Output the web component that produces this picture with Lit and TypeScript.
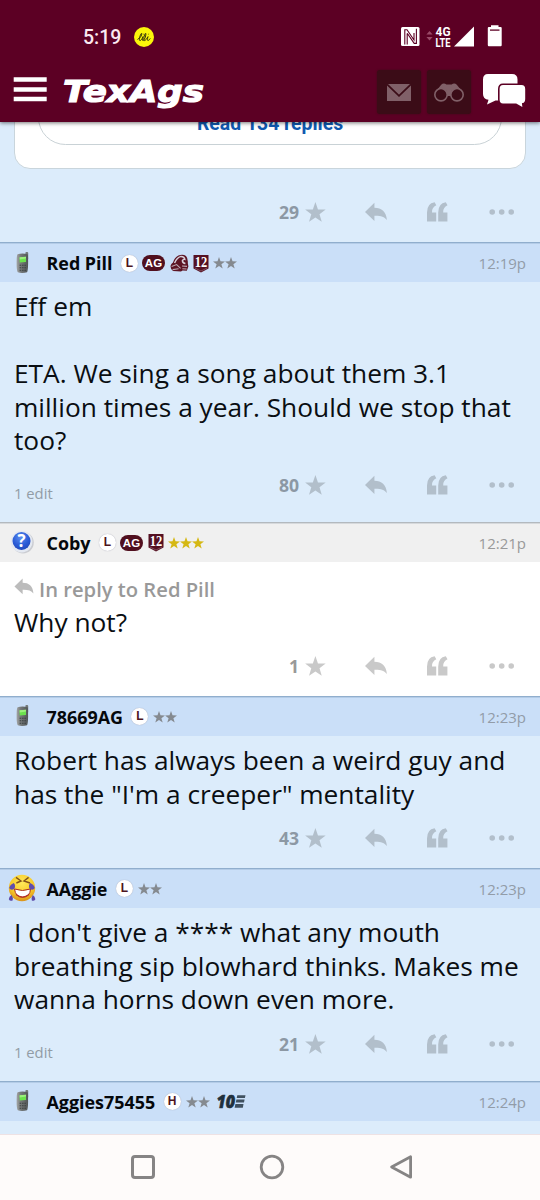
import { LitElement, html, svg, css, nothing } from "lit";
import { customElement, property } from "lit/decorators.js";

interface Post {
  name: string;
  time: string;
  avatar: "phone" | "question" | "laugh";
  badges: string[];
  lines: string[];
  score: string;
  edited?: boolean;
  reply?: string;
  own?: boolean;
}

const posts: Post[] = [
  {
    name: "Red Pill", time: "12:19p", avatar: "phone",
    badges: ["L", "AG", "helmet", "12", "s2"],
    lines: ["Eff em", "", "ETA. We sing a song about them 3.1", "million times a year. Should we stop that", "too?"],
    score: "80", edited: true,
  },
  {
    name: "Coby", time: "12:21p", avatar: "question",
    badges: ["L", "AG", "12", "g3"],
    lines: ["Why not?"], reply: "In reply to Red Pill", score: "1", own: true,
  },
  {
    name: "78669AG", time: "12:23p", avatar: "phone", badges: ["L", "s2"],
    lines: ["Robert has always been a weird guy and", 'has the "I\'m a creeper" mentality'], score: "43",
  },
  {
    name: "AAggie", time: "12:23p", avatar: "laugh", badges: ["L", "s2"],
    lines: ["I don't give a **** what any mouth", "breathing sip blowhard thinks. Makes me", "wanna horns down even more."],
    score: "21", edited: true,
  },
  {
    name: "Aggies75455", time: "12:24p", avatar: "phone", badges: ["H", "s2", "ten"],
    lines: [], score: "",
  },
];

const STAR = "M10 0 L12.5 7.2 L20 7.4 L14 12 L16.2 19.3 L10 15 L3.8 19.3 L6 12 L0 7.4 L7.5 7.2 Z";
const REPLY = "M0 10 L9.6 0.6 V5.7 C17 5.7 21.6 9.5 22.3 18.2 C19.5 14.8 16 13.6 9.6 13.8 V19.2 Z";

const stars = (n: number, color: string) => html`
  <svg width=${n * 12} height="12" viewBox="0 0 ${n * 12} 12">
    ${Array.from({ length: n }, (_, i) => svg`<path d=${STAR} fill=${color} transform="translate(${i * 12} 0) scale(.6)"/>`)}
  </svg>`;

const phone = html`<svg width="16" height="24" viewBox="0 0 16 24">
  <defs><linearGradient id="pb" x1="0" x2="1"><stop offset="0" stop-color="#a3a5a5"/><stop offset=".35" stop-color="#757979"/><stop offset="1" stop-color="#505556"/></linearGradient></defs>
  <rect x="11.4" y="1" width="2.8" height="8" rx="1" fill="#73797a"/>
  <path d="M3.6 3.3 Q8 2 13.5 3.2 Q14.2 3.6 14.1 12 Q14 20 13 21.2 Q8 22.8 3.8 21.3 Q2.6 20 2.6 12 Q2.6 4 3.6 3.3Z" fill="url(#pb)"/>
  <path d="M5.6 6.2 L12 5.8 V11 L5.6 11.4Z" fill="#6be24d"/><path d="M5.6 6.2 L12 5.8 V7.6 L5.6 8.4Z" fill="#9cf07e"/>
  <path d="M5.6 14.3h6.4M5.6 16.8h6.4M5.6 19.2h6.4" stroke="#3c4142" stroke-width="1.1" stroke-dasharray="1.6 .8"/>
</svg>`;

const question = html`<svg width="24" height="24" viewBox="0 0 24 24">
  <defs><radialGradient id="qb" cx=".45" cy=".3" r=".75"><stop offset="0" stop-color="#5c8df0"/><stop offset=".6" stop-color="#2b5cd6"/><stop offset="1" stop-color="#2046b8"/></radialGradient></defs>
  <circle cx="13" cy="12.6" r="10.8" fill="#cbcdd2"/><circle cx="11.6" cy="11.6" r="10.8" fill="#e4e9f2"/>
  <circle cx="11.5" cy="11" r="9" fill="url(#qb)"/>
  <text x="11.5" y="17" text-anchor="middle" font-family="Open Sans" font-weight="700" font-size="17" fill="#fff">?</text>
</svg>`;

const laugh = html`<svg width="28" height="28" viewBox="0 0 28 28">
  <defs><radialGradient id="lf" cx=".5" cy=".3" r=".7"><stop offset="0" stop-color="#ffe95a"/><stop offset=".65" stop-color="#f7c928"/><stop offset="1" stop-color="#d9921b"/></radialGradient></defs>
  <circle cx="14" cy="14" r="13.2" fill="url(#lf)"/>
  <path d="M8 3.4 L13 7 L8.4 9 M20.6 3.4 L16 7 L22 9" fill="none" stroke="#80521b" stroke-width="1.4"/>
  <path d="M6.5 15 Q14.5 18 22.5 15 Q22 23 14.5 23.3 Q7.5 23 6.5 15Z" fill="#fff" stroke="#aa2b22" stroke-width="1"/>
  <path d="M8 20.6 Q14.5 25.5 21 20.6" fill="none" stroke="#b53328" stroke-width="1.3"/>
  <path d="M5.8 9 Q8 11.5 6.4 14.8 Q3 17 1.2 14 Q2 10.5 5.8 9Z M22.2 9 Q20 11.5 21.6 14.8 Q25 17 26.8 14 Q26 10.5 22.2 9Z" fill="#604dae"/>
  <path d="M3.6 21 Q5.6 24 4.6 26.4 Q2 27.5 .8 25.2 Q1 22.5 3.6 21Z M24.8 21 Q23 24 23.8 26.4 Q26 27.5 27.4 25.2 Q27 22.5 24.8 21Z" fill="#5b4aaa"/>
</svg>`;

const avatars = { phone, question, laugh };

const badge = (b: string) => {
  switch (b) {
    case "L":
    case "H":
      return html`<span class="round">${b}</span>`;
    case "AG":
      return html`<span class="ag">AG</span>`;
    case "helmet":
      return html`<svg class="helmet" width="19" height="18" viewBox="0 0 19 18">
        <path d="M.5 12 Q1 9.5 3 8.4 Q4.4 3.4 8.4 1.4 Q13 -.4 16 2 Q18.2 4.4 17.8 9 L18.4 12.5 L16.8 16.8 L12.6 16.4 L11 17.4 L3 17 Q.4 15 .5 12Z" fill="#5c1424"/>
        <path d="M4.6 9 Q6.6 3.8 11 2.4 Q14.6 2.6 14.8 5.4 Q13.4 5 12.4 6.6 Q12.6 9.2 15.4 9.6" fill="none" stroke="#d8d0da" stroke-width="1.5"/>
        <path d="M1.6 12.4 L6.6 10.6 L10.6 14.4 M2.6 15.6 L8.6 14.8 M12 12 L17 12.4 M12.4 14.8 L16.6 15" fill="none" stroke="#bda9b4" stroke-width="1.1"/>
      </svg>`;
    case "12":
      return html`<svg class="twelve" width="16" height="19" viewBox="0 0 16 19">
        <path d="M.5 1 H15.5 V14.6 L8 18.6 L.5 14.6Z" fill="#551122"/><path d="M1.8 14 L8 17 L14.2 14" fill="none" stroke="#ad8794" stroke-width=".5"/>
        <text x="8" y="13.2" text-anchor="middle" textLength="12.5" lengthAdjust="spacingAndGlyphs" font-family="Liberation Serif" font-weight="700" font-size="14.5" fill="#fff">12</text>
      </svg>`;
    case "s2":
      return stars(2, "#858a90");
    case "g3":
      return stars(3, "#d5b813");
    case "ten":
      return html`<svg class="ten" width="30" height="15" viewBox="0 0 30 15">
        <text x="0.5" y="14" textLength="18.5" lengthAdjust="spacingAndGlyphs" font-family="Open Sans" font-weight="800" font-style="italic" font-size="18" fill="#20303d" stroke="#20303d" stroke-width=".6">10</text>
        <path d="M21.3 1.2H29.5L28.9 3.9H20.7Z M20.4 5.6H28.6L28 8.4H19.8Z M19.4 10.1H27.5L26.8 13.8H18.6Z" fill="#405160"/>
      </svg>`;
  }
  return nothing;
};

@customElement("post-actions")
class PostActions extends LitElement {
  @property() score = "";
  static styles = css`
    :host { display: flex; align-items: center; height: 54px; color: #b2bfcb; }
    .score { font: 700 17.6px/24px "Open Sans", sans-serif; color: #8c98a4; margin-right: 6px; }
    :host([plain]) { color: #c9c9c9; }
    :host([plain]) .score { color: #999; }
    svg { display: block; fill: currentColor; }
    .reply { margin-left: 39px; }
    .quote { margin-left: 40px; }
    .dots { margin-left: 41px; }
  `;
  render() {
    return html`
      <span class="score">${this.score}</span>
      <svg width="21" height="20" viewBox="0 0 20.2 19.5"><path d=${STAR} /></svg>
      <svg class="reply" width="22" height="20" viewBox="0 0 22.4 20"><path d=${REPLY} /></svg>
      <svg class="quote" width="21" height="20" viewBox="0 0 21 20">
        <path d="M0 19.4 V10.5 Q0 1.2 7.6 .2 L9.3 3.2 Q4.7 5.4 5 10.4 H9.2 V19.4Z" />
        <path d="M11.2 19.4 V10.5 Q11.2 1.2 18.8 .2 L20.5 3.2 Q15.9 5.4 16.2 10.4 H20.4 V19.4Z" />
      </svg>
      <svg class="dots" width="26" height="6" viewBox="0 0 26 6"><circle cx="3.2" cy="3" r="2.8"/><circle cx="12.7" cy="3" r="2.8"/><circle cx="22.2" cy="3" r="2.8"/></svg>`;
  }
}

@customElement("forum-post")
class ForumPost extends LitElement {
  @property({ attribute: false }) post!: Post;
  static styles = css`
    :host { display: block; font-family: "Open Sans", sans-serif; background: #dcecfb; color: #0a0e12; }
    .own { background: #fff; }
    header { box-sizing: border-box; height: 40px; display: flex; align-items: center; padding: 1px 14px 0 0; border-top: 1px solid #90aecd; box-shadow: inset 0 1px #b4cce7; background: #cadff8; }
    .own header { background: #f0f0f0; border-color: #b3b9be; box-shadow: inset 0 1px #d6d9dc; }
    .avatar { width: 46.5px; flex: none; display: flex; justify-content: center; }
    .avatar svg { margin: -1px 2px 0 0; }
    .avatar svg, .badges svg { display: block; }
    .name { font-weight: 700; font-size: 17.9px; line-height: 24px; white-space: nowrap; color: #05080c; }
    .badges { display: flex; align-items: center; margin-left: 8.5px; flex: 1; }
    .round { box-sizing: border-box; width: 17px; height: 17px; border-radius: 50%; background: #fff; box-shadow: 0 0 1px #99a; color: #4d1420; font: 700 12px/17px "Liberation Sans", sans-serif; text-align: center; margin-right: 4px; }
    .ag { width: 23px; height: 16px; border-radius: 8px; background: #500f1e; color: #fff; font: 700 11.5px/16px "Liberation Sans", sans-serif; text-align: center; margin-right: 5px; }
    .round + svg { margin-left: 1px; }
    .helmet { margin-right: 4px; }
    .twelve { margin-right: 4px; }
    .ten { margin-left: 6px; overflow: visible; }
    time { font-size: 15px; color: #929ca8; }
    .own time { color: #999; }
    .body { padding: 8px 14px 0; font-size: 26.3px; line-height: 33.6px; white-space: nowrap; }
    .line { height: 33.6px; }
    .reply { display: flex; align-items: center; gap: 5px; height: 33px; padding-top: 3px; font-weight: 600; font-size: 20.2px; color: #999; }
    .reply svg { display: block; fill: #bcbcbc; margin-bottom: 5px; }
    footer { display: flex; justify-content: space-between; align-items: flex-start; height: 56.8px; padding: 0 25px 0 14px; }
    footer.edited { height: 64px; }
    .body + footer.edited { height: 64px; }
    .own footer { height: 57px; margin-top: -0.6px; }
    .edit { font-size: 14.8px; line-height: 20px; padding-top: 25.5px; color: #929ca6; }
    .spacer { height: 14px; }
  `;
  render() {
    const p = this.post;
    return html`<article class=${p.own ? "own" : ""}>
      <header>
        <span class="avatar">${avatars[p.avatar]}</span>
        <span class="name">${p.name}</span>
        <span class="badges">${p.badges.map(badge)}</span>
        <time>${p.time}</time>
      </header>
      ${p.lines.length
        ? html`<div class="body">
              ${p.reply ? html`<div class="reply"><svg width="20" height="17" viewBox="0 0 22.4 20"><path d=${REPLY} /></svg><span>${p.reply}</span></div>` : nothing}
              ${p.lines.map((l) => html`<div class="line">${l}</div>`)}
            </div>
            <footer class=${p.edited ? "edited" : ""}>
              <span class="edit">${p.edited ? "1 edit" : ""}</span>
              <post-actions .score=${p.score} ?plain=${!!p.own}></post-actions>
            </footer>`
        : html`<div class="spacer"></div>`}
    </article>`;
  }
}

@customElement("app-root")
class AppRoot extends LitElement {
  static styles = css`
    :host { display: flex; flex-direction: column; width: 540px; height: 1200px; overflow: hidden; font-family: "Open Sans", sans-serif; background: #dcecfb; }
    svg { display: block; }
    .top { position: relative; z-index: 2; flex: none; height: 122px; background: #5c0024; box-shadow: 0 1px 4px rgba(0,0,0,.55); }
    .status { box-sizing: border-box; height: 70px; padding: 4px 37px 0 83px; display: flex; align-items: center; color: #fff; }
    .clock { font: 500 19.5px/24px Roboto, sans-serif; width: 51px; padding-top: 1px; color: #fbe9f0; }
    .sys { margin-left: auto; overflow: visible; }
    .bar { height: 44px; display: flex; align-items: center; padding: 0 14px 0 13px; }
    .menu { margin-top: -5px; }
    .logo { margin-left: 18px; overflow: visible; }
    .tiles { margin-left: auto; display: flex; align-items: center; gap: 6px; }
    .tile { width: 44px; height: 44px; border-radius: 3px; background: #3b0c17; display: grid; place-items: center; box-shadow: 0 0 2px #3b0c17; }
    .chat { margin-left: 5px; margin-right: 0; margin-top: -2px; }
    .feed { flex: none; height: 1012px; overflow: hidden; }
    .first { height: 120px; display: flex; flex-direction: column; }
    .card { box-sizing: border-box; flex: none; height: 80px; margin: -33px 14px 0; border: 1px solid #c9d5dc; border-radius: 16px; background: #fff; padding: 0 23px 24px; }
    .more { box-sizing: border-box; height: 55px; border: 1px solid #c9d2d6; border-radius: 28px; font: 700 19.4px/20px Roboto, sans-serif; color: #1059b0; text-align: center; padding-top: 23px; }
    .foot { display: flex; justify-content: flex-end; padding: 16px 25px 0 0; }
    .nav { flex: none; height: 66px; box-sizing: border-box; border-top: 1px solid #eee2e4; background: #fefbfa; display: flex; justify-content: center; align-items: center; gap: 103px; padding-left: 4px; padding-bottom: 2px; }
  `;
  render() {
    return html`
      <div class="top">
        <div class="status">
          <span class="clock">5:19</span>
          <svg width="20" height="20" viewBox="0 0 20 20"><circle cx="10" cy="10" r="10" fill="#faf60a"/><path d="M3.5 12.5 Q8 10 8 6.6 Q7.2 5.6 6 9 Q4.8 14 6.2 13.6 Q8 13 9 9.6 Q7.8 14 9.3 13.6 Q12 11 12 6.6 Q11.3 5.6 10.2 9 Q9.2 14 10.8 13.6 Q12.6 12.6 14 9.6 Q12.8 13.8 14.2 13.5 Q15.4 13 16.3 11.4 M9.6 7.4 l.1 -.6 M14.5 7.4 l.1 -.6" fill="none" stroke="#3c3c0c" stroke-width="1"/></svg>
          <svg class="sys" width="102" height="24" viewBox="401 25 102 24">
            <rect x="401" y="27" width="18.5" height="19" rx="1.5" fill="#fff"/>
            <path d="M404.8 44.4 V29.8 H407 L414 40 V33 M407.2 33.6 V44.4 M416.4 28.8 V43.4 H414.2 L407.2 33.2" fill="none" stroke="#5c0024" stroke-width="1.1"/>
            <path d="M426.4 34.5 L429.5 31 L432.6 34.5Z M426.4 37 L429.5 40.5 L432.6 37Z" fill="#9a4a68"/>
            <text x="435.6" y="36.2" textLength="15" lengthAdjust="spacingAndGlyphs" font-family="Roboto" font-weight="700" font-size="12" fill="#fff">4G</text>
            <text x="435.6" y="47" textLength="15" lengthAdjust="spacingAndGlyphs" font-family="Roboto" font-weight="700" font-size="12" fill="#fff">LTE</text>
            <path d="M454 46.5 L474 26.5 V46.5Z" fill="#fff"/>
            <path d="M487.8 28 Q487.8 27 488.8 27 H491 V25.2 H498.5 V27 H500.7 Q501.7 27 501.7 28 V45 Q501.7 46.2 500.7 46.2 H488.8 Q487.8 46.2 487.8 45Z" fill="#fff"/><path d="M490 30.1H499.5" stroke="#5c0024" stroke-width="1.3"/>
          </svg>
        </div>
        <div class="bar">
          <svg class="menu" width="34" height="25" viewBox="0 0 34 25"><path d="M.7 2.6H33.7M.7 12.4H33.7M.7 22.1H33.7" stroke="#fff" stroke-width="4.5"/></svg>
          <svg class="logo" width="141" height="34" viewBox="0 0 141 34">
            <text x="-2" y="27" textLength="141" lengthAdjust="spacingAndGlyphs" font-family="DejaVu Sans" font-weight="700" font-style="italic" font-size="31" fill="#fff" stroke="#fff" stroke-width="1.2">TexAgs</text>
          </svg>
          <div class="tiles">
            <div class="tile"><svg width="24" height="17" viewBox="0 0 24 17"><rect width="24" height="17" fill="#806068"/><path d="M0 .3 L12 11.8 L24 .3" fill="none" stroke="#3b0c17" stroke-width="1.8"/></svg></div>
            <div class="tile"><svg width="30" height="19" viewBox="0 0 30 19"><path d="M1 9.5 L7.2 1.8 Q9.5 -.6 12.4 1.4 H17.6 Q20.5 -.6 22.8 1.8 L29 9.5 L18 13 H12Z" fill="#806068"/><g fill="#3b0c17" stroke="#806068" stroke-width="1.6"><circle cx="7" cy="11.7" r="6.2"/><circle cx="23" cy="11.7" r="6.2"/></g></svg></div>
            <svg class="chat" width="44" height="36" viewBox="0 0 44 36"><path d="M6 1 H30 Q35.5 1 35.5 6.5 V21 Q35.5 27.5 30 27.5 H13.5 L5 31.5 L6.5 26.8 Q1 26 1 21 V6.5 Q1 1 6 1Z" fill="#fff"/><path d="M21 11.2 H39.5 Q44 11.2 44 16 V26 Q44 30.2 40.8 30.9 L41.3 35.5 L34 31.2 H21 Q16.8 31.2 16.8 26.5 V16 Q16.8 11.2 21 11.2Z" fill="#fff" stroke="#5c0024" stroke-width="1.6"/></svg>
          </div>
        </div>
      </div>
      <div class="feed">
        <div class="first">
          <div class="card"><div class="more">Read 134 replies</div></div>
          <div class="foot"><post-actions score="29"></post-actions></div>
        </div>
        ${posts.map((p) => html`<forum-post .post=${p}></forum-post>`)}
      </div>
      <div class="nav">
        <svg width="26" height="26" viewBox="0 0 26 26"><rect x="2.5" y="2.5" width="21" height="21" rx="2.5" fill="none" stroke="#868484" stroke-width="3"/></svg>
        <svg width="26" height="26" viewBox="0 0 26 26"><circle cx="13" cy="13" r="10.8" fill="none" stroke="#868484" stroke-width="2.8"/></svg>
        <svg width="26" height="26" viewBox="0 0 26 26"><path d="M22.6 2.8 V23.2 L3.6 13Z" fill="none" stroke="#868484" stroke-width="2.8" stroke-linejoin="round"/></svg>
      </div>`;
  }
}
